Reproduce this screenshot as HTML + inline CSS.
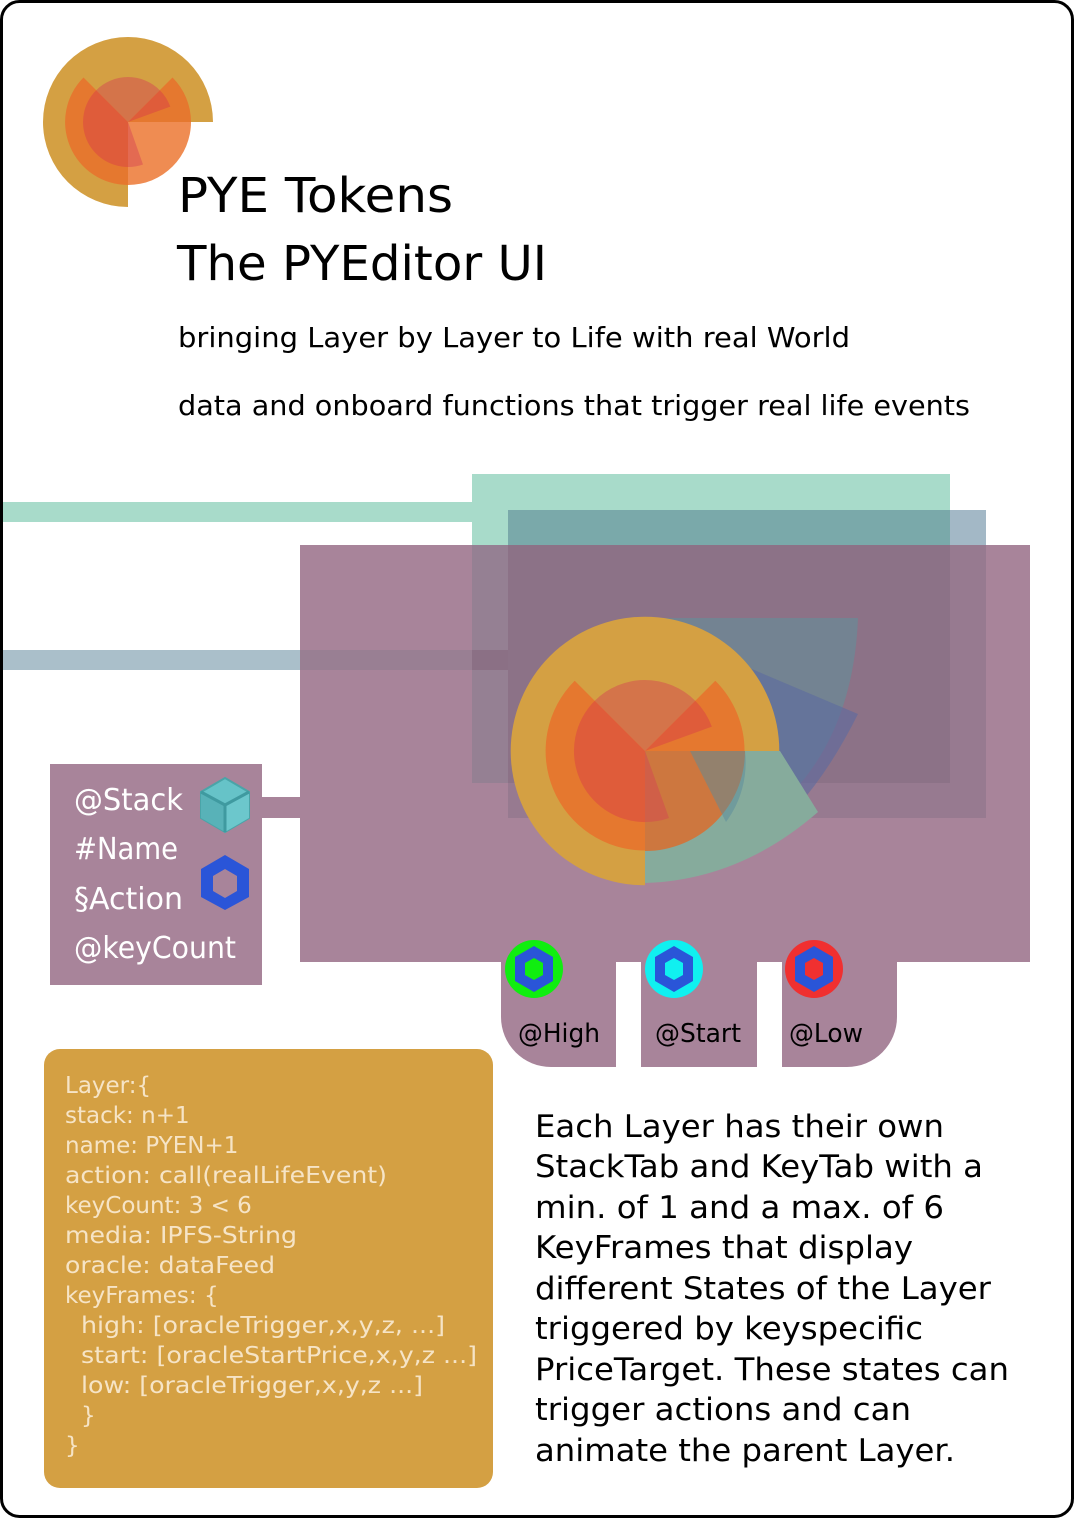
<!DOCTYPE html>
<html><head><meta charset="utf-8"><style>
html,body{margin:0;padding:0;background:#fff;}
svg{display:block;}
text{font-family:"DejaVu Sans","Liberation Sans",sans-serif;}
</style></head><body>
<svg width="1075" height="1520" viewBox="0 0 1075 1520" xmlns="http://www.w3.org/2000/svg">
<defs>
<g id="logo">
  <path d="M0 0 L85 0 A85 85 0 1 0 0 85 Z" fill="#d4a043"/>
  <path d="M0 0 L-44.5 -44.5 A63 63 0 0 0 0 63 Z" fill="#e5782f"/>
  <path d="M0 0 L63 0 A63 63 0 0 0 44.5 -44.5 Z" fill="#e5782f"/>
  <path d="M0 0 L63 0 A63 63 0 0 1 0 63 Z" fill="#ef8c52"/>
  <path d="M0 0 L-31.8 -31.8 A45 45 0 0 1 31.8 -31.8 Z" fill="#d4744a"/>
  <path d="M0 0 L-31.8 -31.8 A45 45 0 0 0 0 45 Z" fill="#df5c3a"/>
  <path d="M0 0 L0 45 A45 45 0 0 0 15 42.5 Z" fill="#e36a52"/>
  <path d="M0 0 L31.8 -31.8 A45 45 0 0 1 42.3 -15.4 Z" fill="#df5c3a"/>
</g>
</defs>
<rect x="1.5" y="1.5" width="1071" height="1515" rx="18" fill="#fff" stroke="#000" stroke-width="3"/>

<use href="#logo" transform="translate(128,122)"/>

<text x="178" y="212" font-size="48" textLength="275" lengthAdjust="spacingAndGlyphs" fill="#000">PYE Tokens</text>
<text x="177" y="280" font-size="48" textLength="370" lengthAdjust="spacingAndGlyphs" fill="#000">The PYEditor UI</text>
<text x="178" y="347" font-size="28" textLength="672" lengthAdjust="spacingAndGlyphs" fill="#000">bringing Layer by Layer to Life with real World</text>
<text x="178" y="415" font-size="28" textLength="792" lengthAdjust="spacingAndGlyphs" fill="#000">data and onboard functions that trigger real life events</text>

<rect x="3" y="502" width="469" height="20" fill="#a8dbca"/>
<rect x="472" y="474" width="478" height="309" fill="#a8dbca"/>
<rect x="3" y="650" width="505" height="20" fill="#aabfca"/>
<rect x="508" y="510" width="478" height="308" fill="#a3b8c6"/>
<rect x="508" y="510" width="442" height="273" fill="#7aa9aa"/>
<rect x="300" y="545" width="730" height="417" fill="#a8849a"/>
<rect x="472" y="545" width="36" height="238" fill="#958093"/>
<rect x="508" y="545" width="478" height="273" fill="#977a90"/>
<rect x="508" y="545" width="442" height="238" fill="#8c7287"/>
<rect x="300" y="650" width="208" height="20" fill="#997f93"/>
<rect x="472" y="650" width="36" height="20" fill="#8b7085"/>

<path d="M645 618 L858 618 Q852 770 735 838 L645 751 Z" fill="#6b8a96" opacity="0.75"/>
<path d="M747 667 L858 714 Q815 800 762 839 L734 838 Z" fill="#5c6aa0" opacity="0.6"/>
<path d="M645 751 L780 751 L818 812 Q740 880 645 883 Z" fill="#86ab9c"/>
<use href="#logo" transform="translate(645,751) scale(1.58)"/>
<path d="M645 751 L745 751 A100 100 0 0 1 645 851 Z" fill="#cd773f"/>
<path d="M645 751 L690 751 L726 822 A100 100 0 0 0 745 751 Z" fill="#5a8b9c" opacity="0.5"/>
<path d="M645 751 L0 0" stroke="none"/>
<path d="M645 751 L645 822 A71 71 0 0 0 669 818 Z" fill="#d05f48"/>

<rect x="50" y="764" width="212" height="221" fill="#a8849a"/>
<rect x="262" y="797" width="38" height="21" fill="#a8849a"/>
<g fill="#fff" font-size="30">
<text x="74" y="810" textLength="109" lengthAdjust="spacingAndGlyphs">@Stack</text>
<text x="74" y="859" textLength="104" lengthAdjust="spacingAndGlyphs">#Name</text>
<text x="74" y="909" textLength="109" lengthAdjust="spacingAndGlyphs">§Action</text>
<text x="74" y="958" textLength="162" lengthAdjust="spacingAndGlyphs">@keyCount</text>
</g>
<polygon points="225,778 249,792 249,818 225,832 201,818 201,792" fill="#66c3c8" stroke="#4aa4a8" stroke-width="2"/>
<polygon points="225,805 249,792 249,818 225,832" fill="#6cc7cc"/>
<polygon points="225,805 201,792 201,818 225,832" fill="#58b2b8"/>
<path d="M225 805 V832 M225 805 L201 792 M225 805 L249 792" stroke="#3f9aa0" stroke-width="3" fill="none"/>
<path fill-rule="evenodd" fill="#2a55d8" d="M225 855 L249 869 L249 897 L225 910 L201 897 L201 869 Z M225 869 L237 876 L237 891 L225 898 L213 891 L213 876 Z"/>

<path d="M501 962 H616 V1067 H551 A50 50 0 0 1 501 1017 Z" fill="#a8849a"/>
<rect x="641" y="962" width="116" height="105" fill="#a8849a"/>
<path d="M782 962 H897 V1017 A50 50 0 0 1 847 1067 H782 Z" fill="#a8849a"/>
<g>
<ellipse cx="534" cy="969" rx="29" ry="29" fill="#10ee10"/>
<polygon points="534,946 553,957 553,981 534,992 515,981 515,957" fill="#2a55d8"/>
<polygon points="534,958 543,963 543,975 534,980 525,975 525,963" fill="#10ee10"/>
<ellipse cx="674" cy="969" rx="29" ry="29" fill="#10f0f0"/>
<polygon points="674,946 693,957 693,981 674,992 655,981 655,957" fill="#2a55d8"/>
<polygon points="674,958 683,963 683,975 674,980 665,975 665,963" fill="#10f0f0"/>
<ellipse cx="814" cy="969" rx="29" ry="29" fill="#f03030"/>
<polygon points="814,946 833,957 833,981 814,992 795,981 795,957" fill="#2a55d8"/>
<polygon points="814,958 823,963 823,975 814,980 805,975 805,963" fill="#f03030"/>
</g>
<g fill="#000" font-size="26">
<text x="518" y="1042" textLength="82" lengthAdjust="spacingAndGlyphs">@High</text>
<text x="655" y="1042" textLength="86" lengthAdjust="spacingAndGlyphs">@Start</text>
<text x="789" y="1042" textLength="74" lengthAdjust="spacingAndGlyphs">@Low</text>
</g>

<rect x="44" y="1049" width="449" height="439" rx="16" fill="#d4a043"/>
<g fill="#f6e4c6" font-size="23">
<text x="65" y="1093">Layer:{</text>
<text x="65" y="1123">stack: n+1</text>
<text x="65" y="1153">name: PYEN+1</text>
<text x="65" y="1183" textLength="322" lengthAdjust="spacingAndGlyphs">action: call(realLifeEvent)</text>
<text x="65" y="1213">keyCount: 3 &lt; 6</text>
<text x="65" y="1243" textLength="232" lengthAdjust="spacingAndGlyphs">media: IPFS-String</text>
<text x="65" y="1273" textLength="210" lengthAdjust="spacingAndGlyphs">oracle: dataFeed</text>
<text x="65" y="1303">keyFrames: {</text>
<text x="81" y="1333" textLength="364" lengthAdjust="spacingAndGlyphs">high: [oracleTrigger,x,y,z, ...]</text>
<text x="81" y="1363" textLength="396" lengthAdjust="spacingAndGlyphs">start: [oracleStartPrice,x,y,z ...]</text>
<text x="81" y="1393" textLength="342" lengthAdjust="spacingAndGlyphs">low: [oracleTrigger,x,y,z ...]</text>
<text x="81" y="1423">}</text>
<text x="65" y="1453">}</text>
</g>

<g fill="#000" font-size="31">
<text x="535" y="1137" textLength="409" lengthAdjust="spacingAndGlyphs">Each Layer has their own</text>
<text x="535" y="1177" textLength="448" lengthAdjust="spacingAndGlyphs">StackTab and KeyTab with a</text>
<text x="535" y="1218" textLength="409" lengthAdjust="spacingAndGlyphs">min. of 1 and a max. of 6</text>
<text x="535" y="1258" textLength="378" lengthAdjust="spacingAndGlyphs">KeyFrames that display</text>
<text x="535" y="1299" textLength="456" lengthAdjust="spacingAndGlyphs">different States of the Layer</text>
<text x="535" y="1339" textLength="388" lengthAdjust="spacingAndGlyphs">triggered by keyspecific</text>
<text x="535" y="1380" textLength="474" lengthAdjust="spacingAndGlyphs">PriceTarget. These states can</text>
<text x="535" y="1420" textLength="376" lengthAdjust="spacingAndGlyphs">trigger actions and can</text>
<text x="535" y="1461" textLength="420" lengthAdjust="spacingAndGlyphs">animate the parent Layer.</text>
</g>
</svg>
</body></html>
